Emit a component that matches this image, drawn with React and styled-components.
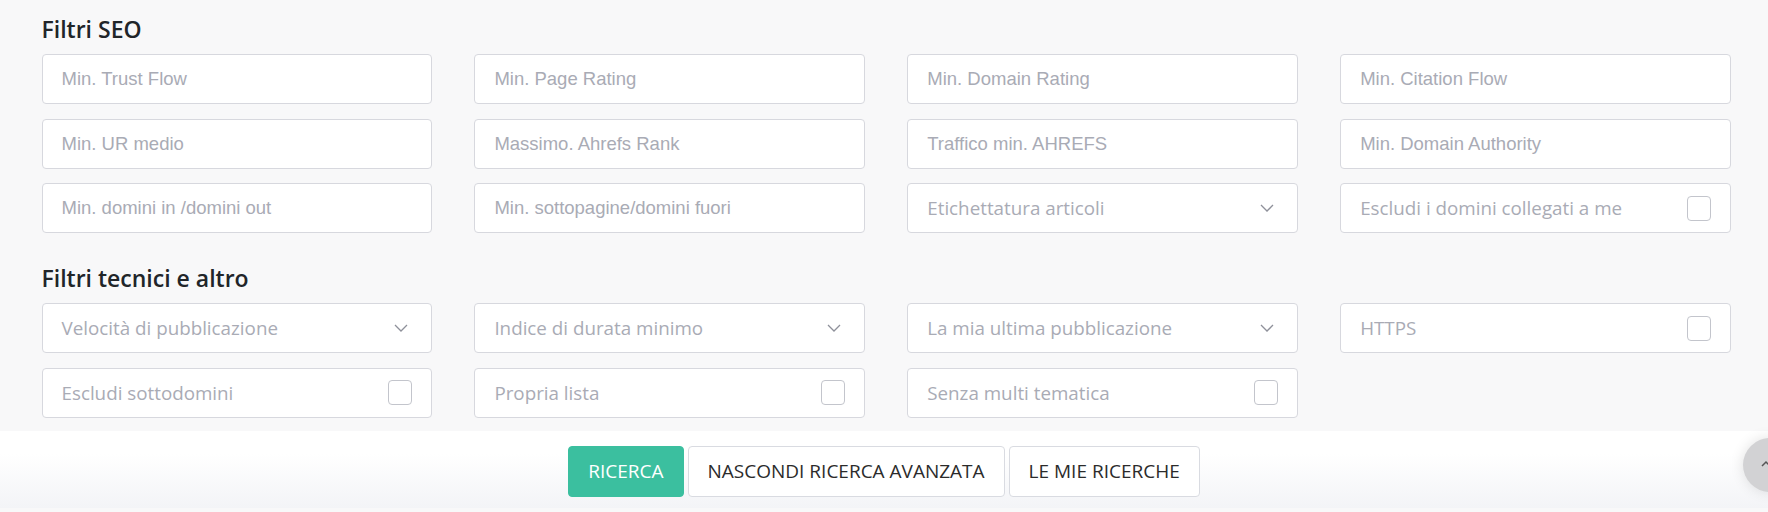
import React from 'react';
import styled, { createGlobalStyle } from 'styled-components';

const GlobalStyle = createGlobalStyle`
	html, body {
		margin: 0;
		padding: 0;
		background: #f8f8f9;
		font-family: 'Open Sans', 'Liberation Sans', sans-serif;
		overflow: hidden;
	}
	* {
		box-sizing: border-box;
	}
`;

const Page = styled.div`
	width: 1768px;
	height: 512px;
	display: flex;
	flex-direction: column;
	position: relative;
	overflow: hidden;
`;

const Filters = styled.div`
	background: #f8f8f9;
	padding: 16px 37px 13px 41.5px;
`;

const SectionTitle = styled.h3`
	margin: ${({ first }) => (first ? '0' : '32px')} 0 11px;
	font-family: 'Open Sans', sans-serif;
	font-weight: 600;
	font-size: 23px;
	line-height: 27px;
	color: #212529;
`;

const Grid = styled.div`
	display: grid;
	grid-template-columns: repeat(4, 1fr);
	column-gap: 42px;
	row-gap: 14.5px;
`;

const Field = styled.div`
	height: 50px;
	background: #fff;
	border: 1px solid #d7d8de;
	border-radius: 4px;
	display: flex;
	align-items: center;
	justify-content: space-between;
	padding: 0 19px;
	font-family: ${({ sans }) =>
		sans ? "'Liberation Sans', Arial, sans-serif" : "'Open Sans', sans-serif"};
	font-size: ${({ sans }) => (sans ? '18.5px' : '18.8px')};
	color: #a9abb5;
	white-space: nowrap;
`;

const Chevron = styled.svg`
	width: 14px;
	height: 8px;
	margin-right: 4px;
	flex-shrink: 0;
`;

const Check = styled.span`
	width: 24px;
	height: 25px;
	border: 1px solid #c3c5cc;
	border-radius: 4px;
	background: #fff;
	flex-shrink: 0;
`;

const Empty = styled.div``;

const ActionBar = styled.div`
	flex: 1;
	background: linear-gradient(#ffffff 30%, #f3f4f7 100%);
	display: flex;
	justify-content: center;
	align-items: flex-start;
	gap: 4px;
	padding-top: 15px;
	border-bottom: 4px solid #f8f8f9;
`;

const Button = styled.button`
	height: 51px;
	padding: 0 19px;
	border-radius: 4px;
	border: 1px solid ${({ primary }) => (primary ? '#3bbf9f' : '#d9dbe1')};
	background: ${({ primary }) => (primary ? '#3bbf9f' : '#fff')};
	color: ${({ primary }) => (primary ? '#fff' : '#2b2b2b')};
	font-family: 'Open Sans', sans-serif;
	font-weight: 400;
	font-size: 19px;
	text-transform: uppercase;
	cursor: pointer;
`;

const ScrollTop = styled.div`
	position: absolute;
	left: 1743px;
	top: 438px;
	width: 54px;
	height: 54px;
	border-radius: 50%;
	background: #d2d2d4;
	box-shadow: 0 0 14px rgba(0, 0, 0, 0.12);
	display: flex;
	align-items: center;
	padding-left: 18px;
	color: #555;
`;

const ChevronIcon = () => (
	<Chevron viewBox='0 0 14 8'>
		<path d='M1 1l6 6 6-6' fill='none' stroke='#8e909a' strokeWidth='1.3' />
	</Chevron>
);

const seo = [
	{ label: 'Min. Trust Flow', sans: true },
	{ label: 'Min. Page Rating', sans: true },
	{ label: 'Min. Domain Rating', sans: true },
	{ label: 'Min. Citation Flow', sans: true },
	{ label: 'Min. UR medio', sans: true },
	{ label: 'Massimo. Ahrefs Rank', sans: true },
	{ label: 'Traffico min. AHREFS', sans: true },
	{ label: 'Min. Domain Authority', sans: true },
	{ label: 'Min. domini in /domini out', sans: true },
	{ label: 'Min. sottopagine/domini fuori', sans: true },
	{ label: 'Etichettatura articoli', type: 'select' },
	{ label: 'Escludi i domini collegati a me', type: 'check' },
];

const tech = [
	{ label: 'Velocità di pubblicazione', type: 'select' },
	{ label: 'Indice di durata minimo', type: 'select' },
	{ label: 'La mia ultima pubblicazione', type: 'select' },
	{ label: 'HTTPS', type: 'check' },
	{ label: 'Escludi sottodomini', type: 'check' },
	{ label: 'Propria lista', type: 'check' },
	{ label: 'Senza multi tematica', type: 'check' },
];

function FilterField({ label, type, sans }) {
	return (
		<Field sans={sans}>
			<span>{label}</span>
			{type === 'select' && <ChevronIcon />}
			{type === 'check' && <Check />}
		</Field>
	);
}

export default function App() {
	return (
		<Page>
			<GlobalStyle />
			<Filters>
				<SectionTitle first>Filtri SEO</SectionTitle>
				<Grid>
					{seo.map((f) => (
						<FilterField key={f.label} {...f} />
					))}
				</Grid>
				<SectionTitle>Filtri tecnici e altro</SectionTitle>
				<Grid>
					{tech.map((f) => (
						<FilterField key={f.label} {...f} />
					))}
					<Empty />
				</Grid>
			</Filters>
			<ActionBar>
				<Button primary>Ricerca</Button>
				<Button>Nascondi ricerca avanzata</Button>
				<Button>Le mie ricerche</Button>
			</ActionBar>
			<ScrollTop>
				<svg width='10' height='10' viewBox='0 0 10 10'>
					<path d='M1 6l4-4 4 4' fill='none' stroke='#555' strokeWidth='1.5' />
				</svg>
			</ScrollTop>
		</Page>
	);
}
